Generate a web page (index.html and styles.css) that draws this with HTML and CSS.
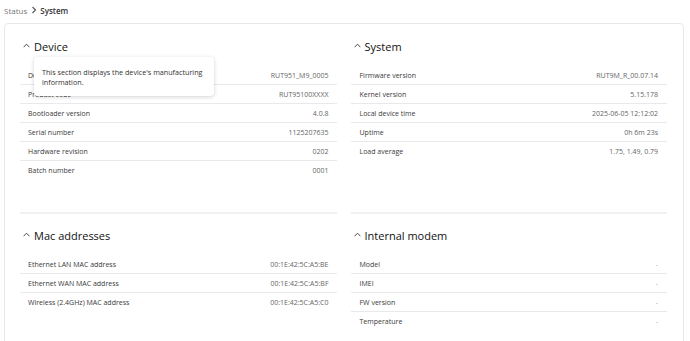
FILE: index.html
```html
<!DOCTYPE html>
<html>
<head>
<meta charset="utf-8">
<link rel="stylesheet" href="styles.css">
</head>
<body>
<nav class="crumbs"><span class="crumb">Status</span><svg class="crumb-sep" width="6" height="8" viewBox="0 0 6 8"><path d="M1.5 1 L4.5 4 L1.5 7" fill="none" stroke="#555" stroke-width="1.1"/></svg><span class="crumb current">System</span></nav>
<main class="card">
  <section class="section top">
    <h2 class="head"><svg class="chev" width="7" height="5" viewBox="0 0 7 5"><path d="M0.6 4.2 L3.5 1.2 L6.4 4.2" fill="none" stroke="#333" stroke-width="0.9"/></svg>Device</h2>
    <div class="rows">
      <div class="row"><span>Device name</span><span class="val">RUT951_M9_0005</span></div>
      <div class="row"><span>Product code</span><span class="val">RUT95100XXXX</span></div>
      <div class="row"><span>Bootloader version</span><span class="val">4.0.8</span></div>
      <div class="row"><span>Serial number</span><span class="val">1125207635</span></div>
      <div class="row"><span>Hardware revision</span><span class="val">0202</span></div>
      <div class="row"><span>Batch number</span><span class="val">0001</span></div>
    </div>
    <div class="tooltip">This section displays the device's manufacturing information.</div>
  </section>
  <section class="section top">
    <h2 class="head"><svg class="chev" width="7" height="5" viewBox="0 0 7 5"><path d="M0.6 4.2 L3.5 1.2 L6.4 4.2" fill="none" stroke="#333" stroke-width="0.9"/></svg>System</h2>
    <div class="rows">
      <div class="row"><span>Firmware version</span><span class="val">RUT9M_R_00.07.14</span></div>
      <div class="row"><span>Kernel version</span><span class="val">5.15.178</span></div>
      <div class="row"><span>Local device time</span><span class="val">2025-06-05 12:12:02</span></div>
      <div class="row"><span>Uptime</span><span class="val">0h 6m 23s</span></div>
      <div class="row"><span>Load average</span><span class="val">1.75, 1.49, 0.79</span></div>
    </div>
  </section>
  <section class="section">
    <h2 class="head"><svg class="chev" width="7" height="5" viewBox="0 0 7 5"><path d="M0.6 4.2 L3.5 1.2 L6.4 4.2" fill="none" stroke="#333" stroke-width="0.9"/></svg>Mac addresses</h2>
    <div class="rows">
      <div class="row"><span>Ethernet LAN MAC address</span><span class="val">00:1E:42:5C:A5:BE</span></div>
      <div class="row"><span>Ethernet WAN MAC address</span><span class="val">00:1E:42:5C:A5:BF</span></div>
      <div class="row"><span>Wireless (2.4GHz) MAC address</span><span class="val">00:1E:42:5C:A5:C0</span></div>
    </div>
  </section>
  <section class="section">
    <h2 class="head"><svg class="chev" width="7" height="5" viewBox="0 0 7 5"><path d="M0.6 4.2 L3.5 1.2 L6.4 4.2" fill="none" stroke="#333" stroke-width="0.9"/></svg>Internal modem</h2>
    <div class="rows">
      <div class="row"><span>Model</span><span class="val dash">-</span></div>
      <div class="row"><span>IMEI</span><span class="val dash">-</span></div>
      <div class="row"><span>FW version</span><span class="val dash">-</span></div>
      <div class="row"><span>Temperature</span><span class="val dash">-</span></div>
    </div>
  </section>
</main>
</body>
</html>
```

FILE: styles.css
```css
* { box-sizing: border-box; }
html, body { margin: 0; padding: 0; background: #fff; }
body {
  font-family: "Open Sans", "Noto Sans", sans-serif;
  color: #333;
  overflow: hidden;
}
.crumbs {
  display: flex;
  align-items: center;
  height: 22px;
  padding: 0 0 2px 4px;
  font-size: 8px;
}
.crumb { color: #777; }
.crumb-sep { margin: 0 3px 0 4px; }
.crumb.current { color: #333; font-weight: 600; }
.card {
  margin: 1px 6px 0 4px;
  border: 1px solid #e8e8eb;
  border-radius: 4px;
  padding: 12px 16px 20px 15px;
  display: grid;
  grid-template-columns: 1fr 1fr;
  column-gap: 14px;
}
.section { position: relative; }
.section.top {
  border-bottom: 2px solid #f1f1f4;
  padding-bottom: 32px;
  margin-bottom: 11px;
}
.head {
  margin: 0 0 10px;
  display: flex;
  align-items: center;
  height: 20px;
  padding-left: 3px;
  font-size: 11px;
  font-weight: 500;
  color: #111;
}
.chev { margin-right: 4px; margin-top: -1px; }
.row {
  display: flex;
  justify-content: space-between;
  align-items: center;
  height: 19px;
  padding: 0 8px;
  border-bottom: 1px solid #e9e9ed;
  font-size: 7px;
  color: #3a3a3a;
}
.section:nth-child(even) .row { padding: 0 9px; }
.row:last-child { border-bottom: none; }
.val { color: #666; }
.dash { color: #aaa; }
.tooltip {
  position: absolute;
  left: 14px;
  top: 21px;
  width: 180px;
  padding: 10px 6px 9px 8px;
  background: #fff;
  border-radius: 4px;
  box-shadow: 0 1px 4px rgba(0,0,0,0.18);
  font-size: 7.2px;
  line-height: 10px;
  color: #333;
}
```
